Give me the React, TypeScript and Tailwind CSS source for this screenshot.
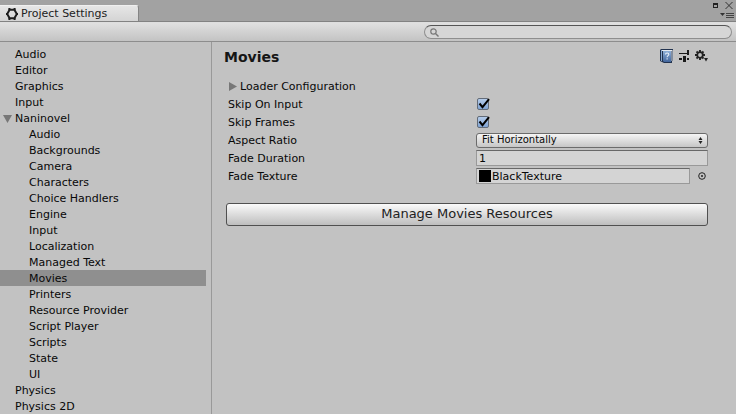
import type { ReactNode } from "react";

type Item = { label: string; child?: boolean; open?: boolean; selected?: boolean };

const items: Item[] = [
  { label: "Audio" },
  { label: "Editor" },
  { label: "Graphics" },
  { label: "Input" },
  { label: "Naninovel", open: true },
  { label: "Audio", child: true },
  { label: "Backgrounds", child: true },
  { label: "Camera", child: true },
  { label: "Characters", child: true },
  { label: "Choice Handlers", child: true },
  { label: "Engine", child: true },
  { label: "Input", child: true },
  { label: "Localization", child: true },
  { label: "Managed Text", child: true },
  { label: "Movies", child: true, selected: true },
  { label: "Printers", child: true },
  { label: "Resource Provider", child: true },
  { label: "Script Player", child: true },
  { label: "Scripts", child: true },
  { label: "State", child: true },
  { label: "UI", child: true },
  { label: "Physics" },
  { label: "Physics 2D" },
];

function HexIcon() {
  return (
    <svg width="12" height="12" viewBox="0 0 12 12" aria-hidden="true">
      <path d="M3.600 1.800h4.800L10.800 6l-2.400 4.200H3.600L1.200 6z" fill="none" stroke="#1e1e1e" strokeWidth="2" />
      <path d="M2.400 0h2v2h-2zM7.600 0h2v2h-2zM2.400 10h2v2h-2zM7.600 10h2v2h-2zM0 5h1.500v2H0zM10.500 5H12v2h-1.500z" fill="#1e1e1e" />
    </svg>
  );
}

function BookIcon() {
  return (
    <svg width="13" height="14" viewBox="0 0 13 14" aria-hidden="true">
      <defs>
        <linearGradient id="cover" x1="0" y1="0" x2="0" y2="1">
          <stop offset="0" stopColor="#8fb0d8" />
          <stop offset="1" stopColor="#41659c" />
        </linearGradient>
      </defs>
      <path d="M1 0h12v12h-1v2H4l-4-2V1z" fill="#22334f" />
      <path d="M3 2h8v11H4l-1-1z" fill="url(#cover)" />
      <path d="M1 1h1v11H1z" fill="#8aa9d0" />
      <path d="M2 1h10v1H2zM11.500 1h1v11h-1z" fill="#e4e9ef" />
      <path d="M5.500 5.500c0-2 3.300-2 3.300 0 0 1.200-1.700 1.200-1.700 2.700M7.100 9.300v1.200" fill="none" stroke="#e8f0fa" strokeWidth="1.100" />
    </svg>
  );
}

function PresetIcon() {
  return (
    <svg width="10" height="12" viewBox="0 0 10 12" aria-hidden="true">
      <path d="M0 3h7v1H0zM8 0h2v5H8zM7 3h1v1H7zM0 8h3v2H0zM4 6h3v6H4zM8 8h2v2H8z" fill="#1a1a1a" />
    </svg>
  );
}

function GearIcon() {
  return (
    <svg width="13" height="12" viewBox="0 0 13 12" aria-hidden="true">
      <circle cx="5" cy="5" r="2.800" fill="none" stroke="#222" strokeWidth="1.800" />
      <path d="M5 0v2M5 8v2M0 5h2M8 5h2M1.500 1.500l1.400 1.400M7.100 7.100l1.400 1.400M1.500 8.500l1.400-1.400M7.100 2.900l1.400-1.400" stroke="#222" strokeWidth="1.900" />
      <path d="M9 8h4l-2 3.500z" fill="#222" />
    </svg>
  );
}

function Row({ label, htmlFor, children }: { label: string; htmlFor: string; children: ReactNode }) {
  return (
    <div className="flex h-[18px] items-center">
      <label htmlFor={htmlFor} className="w-[248px] shrink-0 pt-[2px]">
        {label}
      </label>
      <div className="flex min-w-0 flex-1 items-center">{children}</div>
    </div>
  );
}

function Check({ id }: { id: string }) {
  return (
    <span className="relative ml-px flex size-3">
      <input
        id={id}
        type="checkbox"
        defaultChecked
        className="size-3 appearance-none rounded-[2px] border border-[#626b78] bg-linear-to-b from-[#b4cbe9] to-[#7fa3d3]"
      />
      <svg className="pointer-events-none absolute left-0 top-0" width="13" height="12" viewBox="0 0 13 12" aria-hidden="true">
        <path d="M2.500 5.500l3 3.700L12 1.200" fill="none" stroke="#000" strokeWidth="2" />
      </svg>
    </span>
  );
}

const field = "border border-[#999] border-t-[#686868] bg-[#d4d4d4] px-[2px]";

export default function App() {
  return (
    <div className="flex h-screen flex-col overflow-hidden bg-[#c2c2c2] font-['DejaVu_Sans',Verdana,sans-serif] text-[11px] leading-4 text-[#080808]">
      <header className="flex h-[22px] shrink-0 justify-between border-b border-[#828282] bg-[#a2a2a2]">
        <div className="flex pt-[5px]">
          <h1 className="flex w-[139px] items-center gap-[3px] rounded-tr-[3px] border-r border-t border-[#858585] border-t-[#f0f0f0] bg-linear-to-b from-[#e6e6e6] to-[#d4d4d4] pl-[6px] pt-px text-[#222]">
            <HexIcon />
            Project Settings
          </h1>
        </div>
        <div className="flex flex-col items-end gap-[3px] pr-[3px] pt-[2px]">
          <div className="flex items-center gap-[7px]">
            <button type="button" aria-label="Maximize">
              <svg className="block" width="5" height="7" viewBox="0 0 5 7" aria-hidden="true">
                <path d="M0 1h5v5H0zM1 3v2h3V3z" fill="#222" fillRule="evenodd" />
              </svg>
            </button>
            <button type="button" aria-label="Close">
              <svg className="block" width="8" height="7" viewBox="0 0 8 7" aria-hidden="true">
                <path d="M.5 0l7 7M7.500 0l-7 7" stroke="#333" />
              </svg>
            </button>
          </div>
          <button type="button" aria-label="Tab options" className="-mr-px">
            <svg className="block" width="14" height="6" viewBox="0 0 14 6" aria-hidden="true">
              <path d="M0 1h5L2.500 4z" fill="#333" />
              <path d="M6 1.500h8M6 3.500h8M6 5.500h8" stroke="#444" />
            </svg>
          </button>
        </div>
      </header>

      <div className="flex h-5 shrink-0 items-center justify-end border-b border-[#8d8d8d] border-t border-t-[#dedede] bg-linear-to-b from-[#e0e0e0] to-[#c3c3c3] pr-1">
        <label className="flex h-[14px] w-[308px] items-center rounded-full border border-[#8e8e8e] border-t-[#555] bg-[#d6d6d6] pl-[5px]">
          <svg width="9" height="9" viewBox="0 0 9 9" aria-hidden="true">
            <circle cx="3.500" cy="3.500" r="2.700" fill="none" stroke="#777" strokeWidth="1.200" />
            <path d="M5.500 5.500L8.500 8.500" stroke="#777" strokeWidth="1.400" />
          </svg>
          <input type="search" aria-label="Search settings" className="h-3 min-w-0 flex-1 bg-transparent px-1 outline-none" />
        </label>
      </div>

      <div className="flex min-h-0 flex-1">
        <nav className="w-[212px] shrink-0 overflow-hidden border-r border-[#999] pr-[5px] pt-1">
          <ul>
            {items.map((item, i) => (
              <li key={i}>
                <a
                  href="#"
                  aria-current={item.selected ? "page" : undefined}
                  className={`flex h-4 items-center pt-[2px] ${item.child ? "pl-[29px]" : item.open ? "gap-[3px] pl-[3px]" : "pl-[15px]"} ${item.selected ? "bg-[#8f8f8f]" : ""}`}
                >
                  {item.open && (
                    <svg width="9" height="8" viewBox="0 0 9 8" aria-hidden="true">
                      <path d="M0 0h9L4.500 8z" fill="#777" />
                    </svg>
                  )}
                  {item.label}
                </a>
              </li>
            ))}
          </ul>
        </nav>

        <main className="min-w-0 flex-1 pl-3 pr-7 pt-[5px]">
          <div className="flex h-5 items-center justify-between">
            <h2 className="text-[14px] font-bold leading-5 text-[#161616]">Movies</h2>
            <div className="-mt-[2px] flex items-center gap-[6px]">
              <button type="button" aria-label="Help">
                <BookIcon />
              </button>
              <button type="button" aria-label="Presets">
                <PresetIcon />
              </button>
              <button type="button" aria-label="Settings">
                <GearIcon />
              </button>
            </div>
          </div>

          <form className="pl-1 pt-[10px]" onSubmit={(e) => e.preventDefault()}>
            <button type="button" aria-expanded="false" className="flex h-[18px] items-center gap-[3px] pl-px">
              <svg width="8" height="9" viewBox="0 0 8 9" aria-hidden="true">
                <path d="M0 0v9l8-4.500z" fill="#777" />
              </svg>
              <span className="pt-[2px]">Loader Configuration</span>
            </button>
            <Row label="Skip On Input" htmlFor="skip-input">
              <Check id="skip-input" />
            </Row>
            <Row label="Skip Frames" htmlFor="skip-frames">
              <Check id="skip-frames" />
            </Row>
            <Row label="Aspect Ratio" htmlFor="aspect">
              <span className="relative flex flex-1">
                <select
                  id="aspect"
                  className="h-[15px] w-full appearance-none rounded-[3px] border border-[#6b6b6b] bg-linear-to-b from-[#f5f5f5] to-[#c6c6c6] pl-[5px] text-[10px] leading-3 outline-none"
                >
                  <option>Fit Horizontally</option>
                </select>
                <svg className="pointer-events-none absolute right-[5px] top-1" width="5" height="7" viewBox="0 0 5 7" aria-hidden="true">
                  <path d="M.5 3h4L2.500 0zM.5 4h4L2.500 7z" fill="#222" />
                </svg>
              </span>
            </Row>
            <Row label="Fade Duration" htmlFor="duration">
              <input id="duration" type="text" defaultValue="1" className={`h-4 w-full pt-px outline-none ${field}`} />
            </Row>
            <Row label="Fade Texture" htmlFor="texture">
              <button id="texture" type="button" className={`flex h-4 min-w-0 flex-1 items-center gap-px text-left ${field}`}>
                <span className="size-3 bg-black" />
                <span className="pt-[2px]">BlackTexture</span>
              </button>
              <button type="button" aria-label="Select texture" className="ml-2 mr-[2px]">
                <svg className="block" width="8" height="8" viewBox="0 0 8 8" aria-hidden="true">
                  <circle cx="4" cy="4" r="3.300" fill="none" stroke="#222" />
                  <circle cx="4" cy="4" r="1" fill="#222" />
                </svg>
              </button>
            </Row>
          </form>

          <button
            type="button"
            className="ml-[2px] mt-[18px] flex h-[23px] w-[calc(100%-2px)] items-center justify-center rounded-[3px] border border-[#505050] bg-linear-to-b from-[#fafafa] to-[#bebebe] pb-[2px] text-[13px] leading-4 text-[#222]"
          >
            Manage Movies Resources
          </button>
        </main>
      </div>
    </div>
  );
}
